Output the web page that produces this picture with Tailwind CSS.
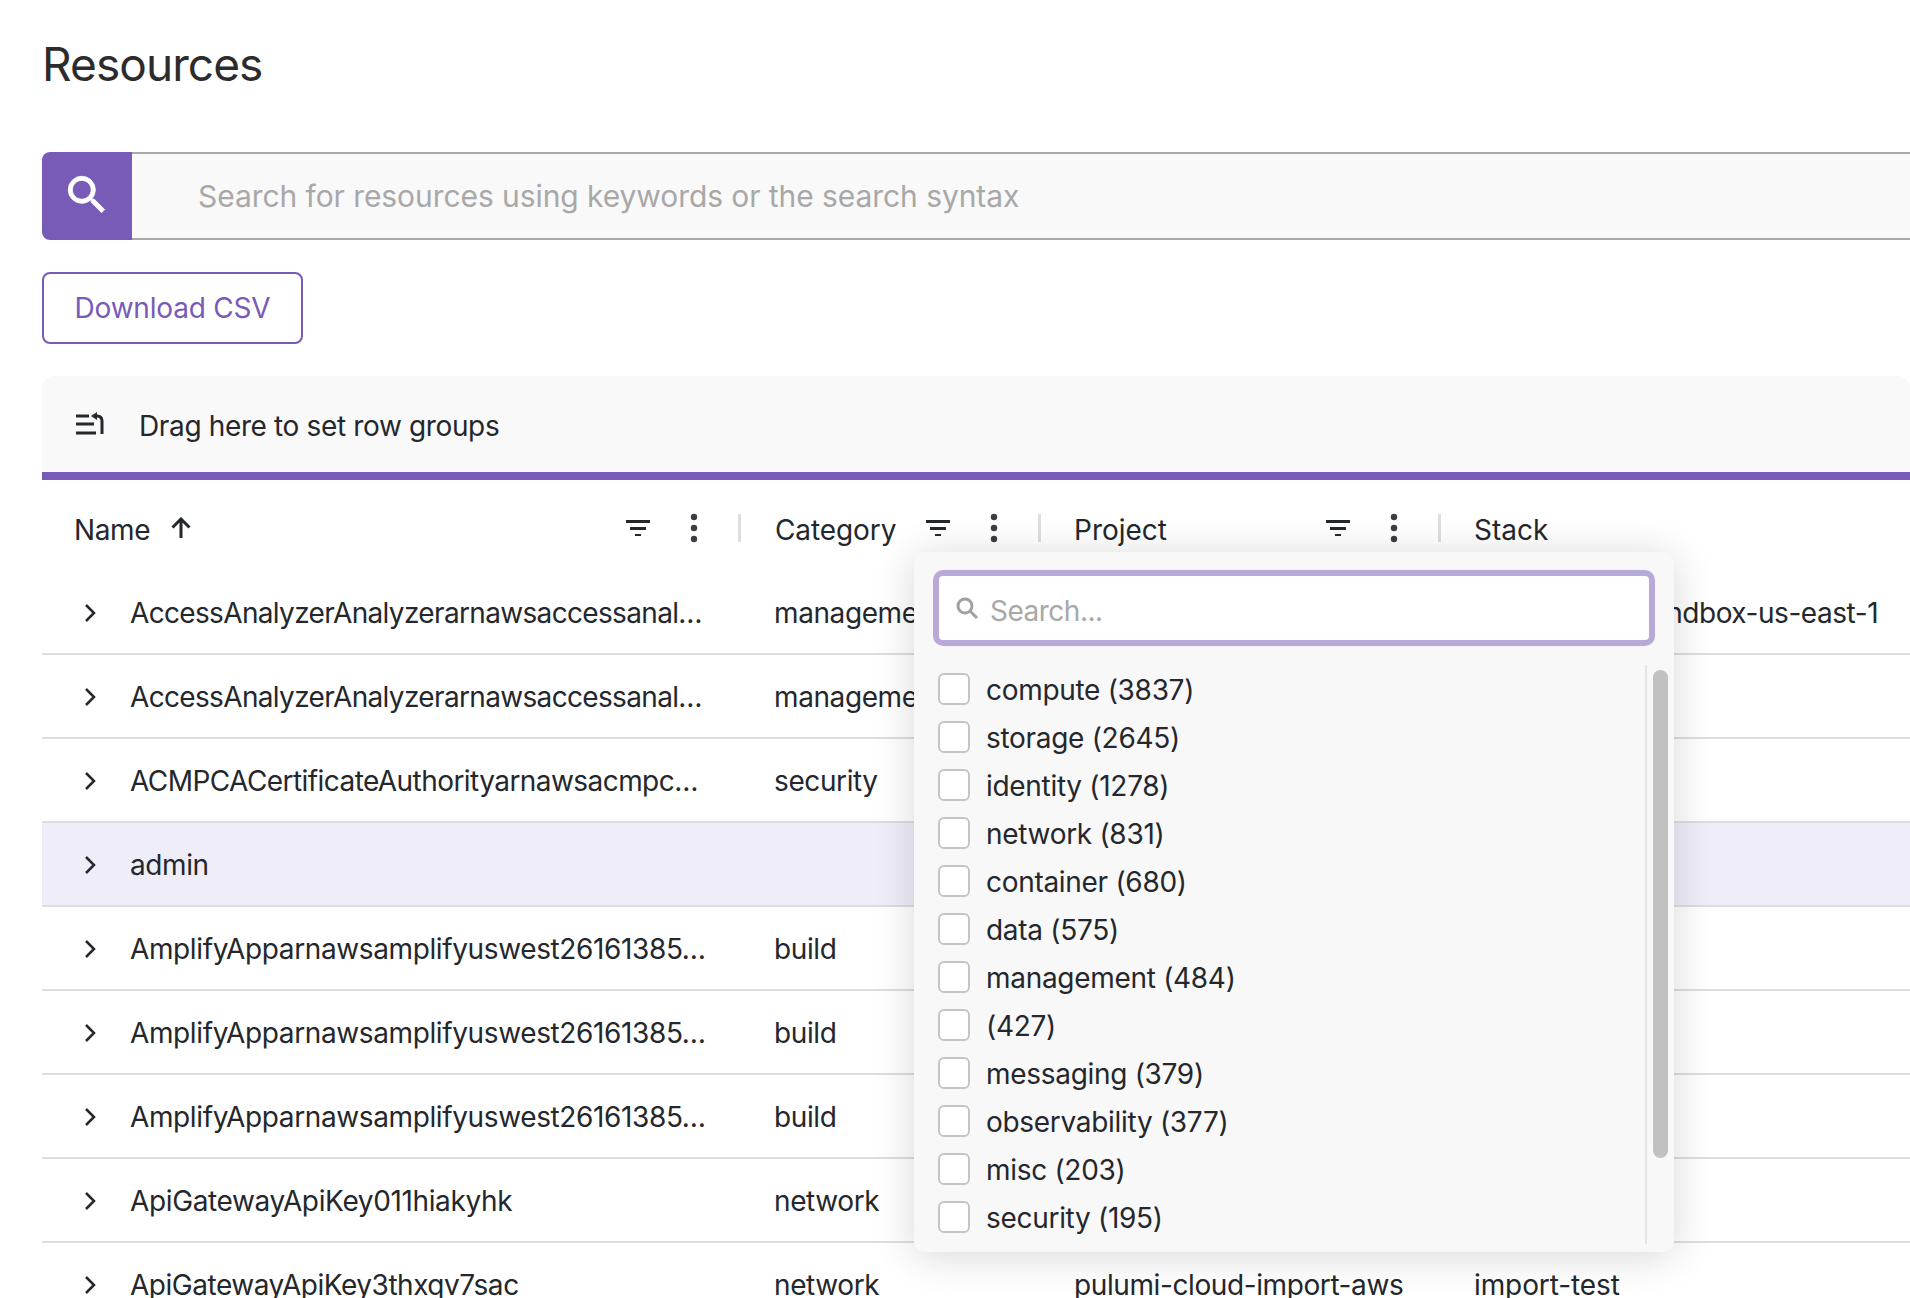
<!DOCTYPE html>
<html lang="en">
<head>
    <meta charset="UTF-8">
    <meta name="viewport" content="width=device-width, initial-scale=1.0">
    <title>Resources</title>
    <script src="https://cdn.jsdelivr.net/npm/@tailwindcss/browser@4"></script>
</head>
<body class="bg-white font-['Inter',sans-serif] text-[28px] text-[#24272c]">
<div class="relative w-[1910px] h-[1298px] overflow-hidden pl-[42px]">

    <h1 class="pt-[40px] h-[152px] text-[46px] leading-[48px] tracking-[-0.92px] text-[#2c2c2c]">Resources</h1>

    <!-- search bar -->
    <div class="flex h-[88px]">
        <div class="flex items-center justify-center w-[90px] bg-[#785bb7] rounded-l-[8px]">
            <svg class="w-[50px] h-[50px] mt-[-2px]" viewBox="0 0 24 24" fill="#fff" stroke="#fff" stroke-width="0.4"><path d="M15.5 14h-.79l-.28-.27A6.471 6.471 0 0 0 16 9.5 6.5 6.5 0 1 0 9.5 16c1.61 0 3.09-.59 4.23-1.57l.27.28v.79l5 4.99L20.49 19l-4.99-5zm-6 0C7.01 14 5 11.99 5 9.5S7.01 5 9.5 5 14 7.01 14 9.5 11.99 14 9.5 14z"/></svg>
        </div>
        <div class="flex-1 flex items-center pl-[66px] bg-[#f9f9f9] border-y-2 border-[#a9a9a9] text-[30px] tracking-[-0.07px] text-[#a8a8a8] whitespace-nowrap">Search for resources using keywords or the search syntax</div>
    </div>

    <button class="block mt-[32px] w-[261px] h-[72px] bg-white border-2 border-[#785bb7] rounded-[8px] text-[#785bb7] tracking-[-0.2px]">Download CSV</button>

    <!-- row group bar -->
    <div class="flex items-center mt-[32px] h-[104px] bg-[#f9f9f9] rounded-t-[12px] border-b-8 border-[#785bb7] pl-[34px]">
        <svg class="w-[28px] h-[24px] mr-[35px] shrink-0" viewBox="0 0 28 24" fill="none" stroke="#24272c" stroke-width="3">
            <path d="M0 4h13M0 12h18M0 21h20"/>
            <path d="M26 22V9q0-5-5-5h-2"/>
            <path d="M21 0v8l-6-4z" fill="#24272c" stroke="none"/>
        </svg>
        <span class="mt-[3px] tracking-[-0.36px]">Drag here to set row groups</span>
    </div>

    <!-- header -->
    <div class="flex h-[91px]">
        <div class="relative w-[701px] shrink-0 flex items-center pl-[32px] pt-[9px]">
            <span class="tracking-[-0.4px]">Name</span>
            <svg class="ml-[20px] w-[22px] h-[22px] mt-[-4px]" viewBox="0 0 22 22" fill="none" stroke="#24272c" stroke-width="3"><path d="M11 21V2M2.500 10.500L11 2l8.500 8.500"/></svg>
            <svg class="absolute left-[584px] top-[40px] w-[24px] h-[16px]" viewBox="0 0 24 16" fill="#24272c"><rect width="24" height="3"/><rect x="4" y="7" width="16" height="3"/><rect x="9" y="14" width="6" height="2"/></svg>
            <svg class="absolute left-[646px] top-[31px] w-[12px] h-[34px]" viewBox="0 0 12 34" fill="#3a3d42"><circle cx="6" cy="6" r="3.200"/><circle cx="6" cy="17" r="3.200"/><circle cx="6" cy="28" r="3.200"/></svg>
            <div class="absolute right-[2px] top-[34px] w-[3px] h-[28px] bg-[#dedee0]"></div>
        </div>
        <div class="relative w-[300px] shrink-0 flex items-center pl-[32px] pt-[9px]">
            <span class="tracking-[-0.1px]">Category</span>
            <svg class="absolute left-[183px] top-[40px] w-[24px] h-[16px]" viewBox="0 0 24 16" fill="#24272c"><rect width="24" height="3"/><rect x="4" y="7" width="16" height="3"/><rect x="9" y="14" width="6" height="2"/></svg>
            <svg class="absolute left-[245px] top-[31px] w-[12px] h-[34px]" viewBox="0 0 12 34" fill="#3a3d42"><circle cx="6" cy="6" r="3.200"/><circle cx="6" cy="17" r="3.200"/><circle cx="6" cy="28" r="3.200"/></svg>
            <div class="absolute right-[2px] top-[34px] w-[3px] h-[28px] bg-[#dedee0]"></div>
        </div>
        <div class="relative w-[400px] shrink-0 flex items-center pl-[31px] pt-[9px]">
            <span>Project</span>
            <svg class="absolute left-[283px] top-[40px] w-[24px] h-[16px]" viewBox="0 0 24 16" fill="#24272c"><rect width="24" height="3"/><rect x="4" y="7" width="16" height="3"/><rect x="9" y="14" width="6" height="2"/></svg>
            <svg class="absolute left-[345px] top-[31px] w-[12px] h-[34px]" viewBox="0 0 12 34" fill="#3a3d42"><circle cx="6" cy="6" r="3.200"/><circle cx="6" cy="17" r="3.200"/><circle cx="6" cy="28" r="3.200"/></svg>
            <div class="absolute right-[2px] top-[34px] w-[3px] h-[28px] bg-[#dedee0]"></div>
        </div>
        <div class="flex items-center pl-[31px] pt-[9px]">Stack</div>
    </div>

    <!-- rows -->
    <div class="flex items-center h-[84px] pt-[2px] border-b-2 border-[#dddde0] whitespace-nowrap">
        <svg class="ml-[42px] w-[12px] h-[20px] shrink-0" viewBox="0 0 12 20" fill="none" stroke="#24272c" stroke-width="2.500"><path d="M2 2l8 8-8 8"/></svg>
        <span class="ml-[34px] w-[644px] shrink-0 tracking-[-0.66px]">AccessAnalyzerAnalyzerarnawsaccessanal…</span>
        <span class="w-[700px] shrink-0 tracking-[-0.4px]">management</span>
        <span class="tracking-[-0.45px]">pulumi-aws-sandbox-us-east-1</span>
    </div>
    <div class="flex items-center h-[84px] pt-[2px] border-b-2 border-[#dddde0] whitespace-nowrap">
        <svg class="ml-[42px] w-[12px] h-[20px] shrink-0" viewBox="0 0 12 20" fill="none" stroke="#24272c" stroke-width="2.500"><path d="M2 2l8 8-8 8"/></svg>
        <span class="ml-[34px] w-[644px] shrink-0 tracking-[-0.66px]">AccessAnalyzerAnalyzerarnawsaccessanal…</span>
        <span class="tracking-[-0.4px]">management</span>
    </div>
    <div class="flex items-center h-[84px] pt-[2px] border-b-2 border-[#dddde0] whitespace-nowrap">
        <svg class="ml-[42px] w-[12px] h-[20px] shrink-0" viewBox="0 0 12 20" fill="none" stroke="#24272c" stroke-width="2.500"><path d="M2 2l8 8-8 8"/></svg>
        <span class="ml-[34px] w-[644px] shrink-0 tracking-[-0.56px]">ACMPCACertificateAuthorityarnawsacmpc…</span>
        <span class="tracking-[-0.4px]">security</span>
    </div>
    <div class="flex items-center h-[84px] pt-[2px] bg-[#efeef8] border-b-2 border-[#dddde0] whitespace-nowrap">
        <svg class="ml-[42px] w-[12px] h-[20px] shrink-0" viewBox="0 0 12 20" fill="none" stroke="#24272c" stroke-width="2.500"><path d="M2 2l8 8-8 8"/></svg>
        <span class="ml-[34px] w-[644px] shrink-0 tracking-[-0.4px]">admin</span>
    </div>
    <div class="flex items-center h-[84px] pt-[2px] border-b-2 border-[#dddde0] whitespace-nowrap">
        <svg class="ml-[42px] w-[12px] h-[20px] shrink-0" viewBox="0 0 12 20" fill="none" stroke="#24272c" stroke-width="2.500"><path d="M2 2l8 8-8 8"/></svg>
        <span class="ml-[34px] w-[644px] shrink-0 tracking-[-0.38px]">AmplifyApparnawsamplifyuswest26161385…</span>
        <span class="tracking-[-0.4px]">build</span>
    </div>
    <div class="flex items-center h-[84px] pt-[2px] border-b-2 border-[#dddde0] whitespace-nowrap">
        <svg class="ml-[42px] w-[12px] h-[20px] shrink-0" viewBox="0 0 12 20" fill="none" stroke="#24272c" stroke-width="2.500"><path d="M2 2l8 8-8 8"/></svg>
        <span class="ml-[34px] w-[644px] shrink-0 tracking-[-0.38px]">AmplifyApparnawsamplifyuswest26161385…</span>
        <span class="tracking-[-0.4px]">build</span>
    </div>
    <div class="flex items-center h-[84px] pt-[2px] border-b-2 border-[#dddde0] whitespace-nowrap">
        <svg class="ml-[42px] w-[12px] h-[20px] shrink-0" viewBox="0 0 12 20" fill="none" stroke="#24272c" stroke-width="2.500"><path d="M2 2l8 8-8 8"/></svg>
        <span class="ml-[34px] w-[644px] shrink-0 tracking-[-0.38px]">AmplifyApparnawsamplifyuswest26161385…</span>
        <span class="tracking-[-0.4px]">build</span>
    </div>
    <div class="flex items-center h-[84px] pt-[2px] border-b-2 border-[#dddde0] whitespace-nowrap">
        <svg class="ml-[42px] w-[12px] h-[20px] shrink-0" viewBox="0 0 12 20" fill="none" stroke="#24272c" stroke-width="2.500"><path d="M2 2l8 8-8 8"/></svg>
        <span class="ml-[34px] w-[644px] shrink-0 tracking-[-0.37px]">ApiGatewayApiKey011hiakyhk</span>
        <span class="tracking-[-0.4px]">network</span>
    </div>
    <div class="flex items-center h-[84px] pt-[2px] border-b-2 border-[#dddde0] whitespace-nowrap">
        <svg class="ml-[42px] w-[12px] h-[20px] shrink-0" viewBox="0 0 12 20" fill="none" stroke="#24272c" stroke-width="2.500"><path d="M2 2l8 8-8 8"/></svg>
        <span class="ml-[34px] w-[644px] shrink-0 tracking-[-0.47px]">ApiGatewayApiKey3thxqv7sac</span>
        <span class="w-[300px] shrink-0 tracking-[-0.4px]">network</span>
        <span class="w-[400px] shrink-0 tracking-[-0.4px]">pulumi-cloud-import-aws</span>
        <span class="tracking-[-0.1px]">import-test</span>
    </div>

    <!-- category filter popup -->
    <div class="absolute left-[914px] top-[552px] w-[760px] h-[700px] bg-[#f8f8f8] rounded-[10px] shadow-[0_4px_40px_rgba(0,0,0,0.16)] pt-[18px]">
        <div class="flex items-center mx-[19px] h-[76px] bg-white border-[6px] border-[#b9a9d9] rounded-[10px] pl-[16px] text-[#a8a8a8]">
            <svg class="w-[24px] h-[24px] mr-[11px] shrink-0" viewBox="0 0 24 24" fill="none" stroke="#a0a0a0" stroke-width="3"><circle cx="10" cy="10" r="7"/><path d="M15 15l7 7"/></svg>
            <span class="mt-[5px] tracking-[-0.5px]">Search...</span>
        </div>
        <div class="relative mt-[19px] pl-[24px] tracking-[-0.3px]">
            <div class="absolute left-[731px] top-[0px] w-[2px] h-[579px] bg-[#e4e4e4]"></div>
            <div class="absolute left-[739px] top-[5px] w-[15px] h-[488px] bg-[#c1c1c1] rounded-full"></div>
            <label class="flex items-center h-[48px]"><span class="w-[32px] h-[32px] bg-white border-2 border-[#c4c4c4] rounded-[6px] mr-[16px]"></span><span class="mt-[2px]">compute (3837)</span></label>
            <label class="flex items-center h-[48px]"><span class="w-[32px] h-[32px] bg-white border-2 border-[#c4c4c4] rounded-[6px] mr-[16px]"></span><span class="mt-[2px]">storage (2645)</span></label>
            <label class="flex items-center h-[48px]"><span class="w-[32px] h-[32px] bg-white border-2 border-[#c4c4c4] rounded-[6px] mr-[16px]"></span><span class="mt-[2px]">identity (1278)</span></label>
            <label class="flex items-center h-[48px]"><span class="w-[32px] h-[32px] bg-white border-2 border-[#c4c4c4] rounded-[6px] mr-[16px]"></span><span class="mt-[2px]">network (831)</span></label>
            <label class="flex items-center h-[48px]"><span class="w-[32px] h-[32px] bg-white border-2 border-[#c4c4c4] rounded-[6px] mr-[16px]"></span><span class="mt-[2px]">container (680)</span></label>
            <label class="flex items-center h-[48px]"><span class="w-[32px] h-[32px] bg-white border-2 border-[#c4c4c4] rounded-[6px] mr-[16px]"></span><span class="mt-[2px]">data (575)</span></label>
            <label class="flex items-center h-[48px]"><span class="w-[32px] h-[32px] bg-white border-2 border-[#c4c4c4] rounded-[6px] mr-[16px]"></span><span class="mt-[2px]">management (484)</span></label>
            <label class="flex items-center h-[48px]"><span class="w-[32px] h-[32px] bg-white border-2 border-[#c4c4c4] rounded-[6px] mr-[16px]"></span><span class="mt-[2px]">(427)</span></label>
            <label class="flex items-center h-[48px]"><span class="w-[32px] h-[32px] bg-white border-2 border-[#c4c4c4] rounded-[6px] mr-[16px]"></span><span class="mt-[2px]">messaging (379)</span></label>
            <label class="flex items-center h-[48px]"><span class="w-[32px] h-[32px] bg-white border-2 border-[#c4c4c4] rounded-[6px] mr-[16px]"></span><span class="mt-[2px]">observability (377)</span></label>
            <label class="flex items-center h-[48px]"><span class="w-[32px] h-[32px] bg-white border-2 border-[#c4c4c4] rounded-[6px] mr-[16px]"></span><span class="mt-[2px]">misc (203)</span></label>
            <label class="flex items-center h-[48px]"><span class="w-[32px] h-[32px] bg-white border-2 border-[#c4c4c4] rounded-[6px] mr-[16px]"></span><span class="mt-[2px]">security (195)</span></label>
        </div>
    </div>
</div>
</body>
</html>
